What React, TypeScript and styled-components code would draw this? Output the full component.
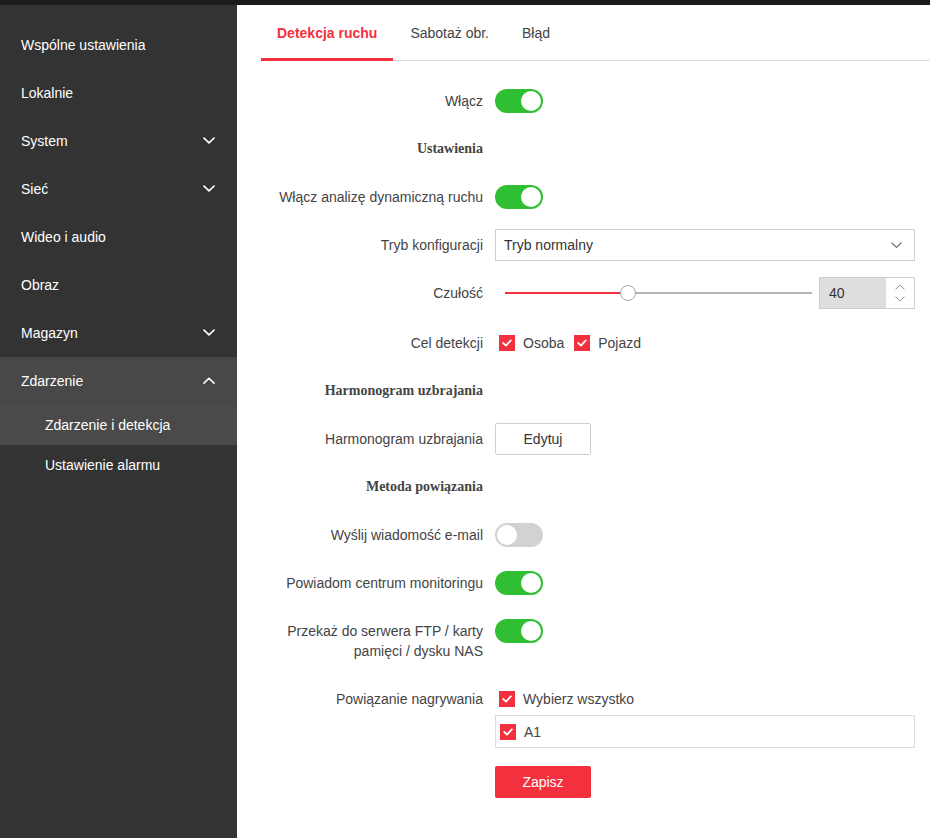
import React, { useState } from 'react'
import styled, { createGlobalStyle } from 'styled-components'

const RED = '#f3303e'
const GREEN = '#30bf32'

const GlobalStyle = createGlobalStyle`
  html, body {
    margin: 0;
    padding: 0;
    background: #ffffff;
  }
  body {
    font-family: 'Liberation Sans', Arial, sans-serif;
    font-size: 14px;
    color: #444;
  }
  * {
    box-sizing: border-box;
  }
`

const Page = styled.div`
  width: 930px;
  height: 838px;
  display: flex;
  flex-direction: column;
  overflow: hidden;
`

const TopBar = styled.div`
  height: 5px;
  background: #1b1b1b;
  flex-shrink: 0;
`

const Body = styled.div`
  flex: 1;
  display: flex;
  min-height: 0;
`

const Sidebar = styled.nav`
  width: 237px;
  flex-shrink: 0;
  background: #333333;
  padding-top: 16px;
`

const MenuGroup = styled.div<{ $open?: boolean }>`
  background: ${({ $open }) => ($open ? '#484848' : 'transparent')};
`

const MenuItem = styled.div`
  height: 48px;
  padding: 0 22px 0 21px;
  display: flex;
  align-items: center;
  justify-content: space-between;
  color: #ffffff;
  font-size: 14px;
`

const SubItem = styled.div<{ $active?: boolean }>`
  height: 40px;
  padding-left: 45px;
  display: flex;
  align-items: center;
  color: #ffffff;
  font-size: 14px;
  background: ${({ $active }) => ($active ? '#4a4a4a' : '#333333')};
`

const Main = styled.main`
  flex: 1;
  padding-left: 24px;
  min-width: 0;
`

const Tabs = styled.div`
  display: flex;
  height: 56px;
  border-bottom: 1px solid #dcdcdc;
`

const Tab = styled.div<{ $active?: boolean }>`
  padding: 3px 16px 0 ${({ $active }) => ($active ? 16 : 17)}px;
  display: flex;
  align-items: center;
  font-size: 14px;
  color: ${({ $active }) => ($active ? RED : '#444')};
  font-weight: ${({ $active }) => ($active ? 700 : 400)};
  border-bottom: 3px solid ${({ $active }) => ($active ? RED : 'transparent')};
  margin-bottom: -1px;
`

const Form = styled.div`
  padding-top: 16px;
  padding-right: 15px;
`

const Row = styled.div<{ $top?: number }>`
  display: grid;
  grid-template-columns: 222px 1fr;
  column-gap: 12px;
  padding-top: ${({ $top }) => $top ?? 0}px;
`

const Label = styled.div`
  padding: 14px 0;
  line-height: 20px;
  text-align: right;
  color: #444;
`

const Heading = styled(Label)`
  font-family: 'Liberation Serif', 'Times New Roman', serif;
  font-weight: 700;
  color: #444;
`

const Control = styled.div`
  height: 48px;
  display: flex;
  align-items: center;
  gap: 6px;
`

const Stack = styled.div`
  padding-top: 14px;
  display: flex;
  flex-direction: column;
`

const SwitchTrack = styled.button<{ $on: boolean }>`
  width: 48px;
  height: 24px;
  border-radius: 12px;
  border: none;
  padding: 2px;
  cursor: pointer;
  display: flex;
  justify-content: ${({ $on }) => ($on ? 'flex-end' : 'flex-start')};
  background: ${({ $on }) => ($on ? GREEN : '#d2d2d2')};
`

const SwitchKnob = styled.span`
  width: 20px;
  height: 20px;
  border-radius: 50%;
  background: #ffffff;
`

const Select = styled.div`
  width: 100%;
  height: 32px;
  border: 1px solid #cfcfcf;
  padding: 0 12px 0 8px;
  display: flex;
  align-items: center;
  justify-content: space-between;
  color: #333;
`

const SliderWrap = styled.div`
  flex: 1;
  display: flex;
  align-items: center;
  gap: 7px;
  padding-left: 10px;
`

const Track = styled.div`
  position: relative;
  flex: 1;
  height: 2px;
  background: #b4b4b4;
`

const TrackFill = styled.div`
  position: absolute;
  left: 0;
  top: 0;
  height: 2px;
  background: ${RED};
`

const Thumb = styled.div`
  position: absolute;
  top: -7px;
  width: 16px;
  height: 16px;
  margin-left: -8px;
  border-radius: 50%;
  background: #ffffff;
  border: 1px solid #a8a8a8;
`

const NumberBox = styled.div`
  width: 96px;
  height: 32px;
  border: 1px solid #cfcfcf;
  display: flex;
`

const NumberValue = styled.div`
  flex: 1;
  background: #dedede;
  padding-left: 9px;
  display: flex;
  align-items: center;
  color: #333;
`

const Spinner = styled.div`
  width: 28px;
  display: flex;
  flex-direction: column;
  align-items: center;
  justify-content: center;
  gap: 6px;
`

const CheckLabel = styled.label`
  display: flex;
  align-items: center;
  gap: 8px;
  color: #444;
  margin-left: 4px;
  line-height: 20px;
`

const CheckBox = styled.span`
  width: 16px;
  height: 16px;
  background: ${RED};
  display: flex;
  align-items: center;
  justify-content: center;
`

const Button = styled.button`
  width: 96px;
  height: 32px;
  border: 1px solid #cfcfcf;
  border-radius: 2px;
  background: #ffffff;
  font-family: inherit;
  font-size: 14px;
  color: #333;
`

const ChannelBox = styled.div`
  margin-top: 6px;
  height: 33px;
  border: 1px solid #dcdcdc;
  display: flex;
  align-items: center;
`

const SaveButton = styled.button`
  margin-top: 18px;
  width: 96px;
  height: 32px;
  border: none;
  border-radius: 2px;
  background: ${RED};
  color: #ffffff;
  font-family: inherit;
  font-size: 14px;
`

function Chevron({
  up,
  color = '#ffffff',
  size = 12,
  weight = 1.6,
}: {
  up?: boolean
  color?: string
  size?: number
  weight?: number
}) {
  return (
    <svg width={size} height={size * 0.6} viewBox="0 0 12 7" fill="none">
      <path
        d={up ? 'M1 6L6 1.2L11 6' : 'M1 1L6 5.8L11 1'}
        stroke={color}
        strokeWidth={weight}
        strokeLinecap="round"
        strokeLinejoin="round"
      />
    </svg>
  )
}

function Check() {
  return (
    <svg width="10" height="8" viewBox="0 0 10 8" fill="none">
      <path d="M1.2 4L4 6.6L8.8 1.4" stroke="#fff" strokeWidth="1.8" strokeLinecap="round" strokeLinejoin="round" />
    </svg>
  )
}

function Toggle({ initial }: { initial: boolean }) {
  const [on, setOn] = useState(initial)
  return (
    <SwitchTrack $on={on} onClick={() => setOn(!on)}>
      <SwitchKnob />
    </SwitchTrack>
  )
}

function Checked({ children }: { children: React.ReactNode }) {
  return (
    <CheckLabel>
      <CheckBox>
        <Check />
      </CheckBox>
      {children}
    </CheckLabel>
  )
}

const menu = [
  { name: 'Wspólne ustawienia' },
  { name: 'Lokalnie' },
  { name: 'System', sub: true },
  { name: 'Sieć', sub: true },
  { name: 'Wideo i audio' },
  { name: 'Obraz' },
  { name: 'Magazyn', sub: true },
]

export default function App() {
  const sensitivity = 40
  return (
    <Page>
      <GlobalStyle />
      <TopBar />
      <Body>
        <Sidebar>
          {menu.map((m) => (
            <MenuItem key={m.name}>
              {m.name}
              {m.sub && <Chevron />}
            </MenuItem>
          ))}
          <MenuGroup $open>
            <MenuItem>
              Zdarzenie
              <Chevron up />
            </MenuItem>
            <SubItem $active>Zdarzenie i detekcja</SubItem>
          </MenuGroup>
          <SubItem>Ustawienie alarmu</SubItem>
        </Sidebar>

        <Main>
          <Tabs>
            <Tab $active>Detekcja ruchu</Tab>
            <Tab>Sabotaż obr.</Tab>
            <Tab>Błąd</Tab>
          </Tabs>

          <Form>
            <Row>
              <Label>Włącz</Label>
              <Control>
                <Toggle initial />
              </Control>
            </Row>
            <Row>
              <Heading>Ustawienia</Heading>
            </Row>
            <Row>
              <Label>Włącz analizę dynamiczną ruchu</Label>
              <Control>
                <Toggle initial />
              </Control>
            </Row>
            <Row>
              <Label>Tryb konfiguracji</Label>
              <Control>
                <Select>
                  Tryb normalny
                  <Chevron color="#666" size={11} weight={1.2} />
                </Select>
              </Control>
            </Row>
            <Row>
              <Label>Czułość</Label>
              <Control>
                <SliderWrap>
                  <Track>
                    <TrackFill style={{ width: `${sensitivity}%` }} />
                    <Thumb style={{ left: `${sensitivity}%` }} />
                  </Track>
                  <NumberBox>
                    <NumberValue>{sensitivity}</NumberValue>
                    <Spinner>
                      <Chevron up color="#8a8a8a" size={10} weight={1.1} />
                      <Chevron color="#8a8a8a" size={10} weight={1.1} />
                    </Spinner>
                  </NumberBox>
                </SliderWrap>
              </Control>
            </Row>
            <Row $top={2}>
              <Label>Cel detekcji</Label>
              <Control>
                <Checked>Osoba</Checked>
                <Checked>Pojazd</Checked>
              </Control>
            </Row>
            <Row>
              <Heading>Harmonogram uzbrajania</Heading>
            </Row>
            <Row>
              <Label>Harmonogram uzbrajania</Label>
              <Control>
                <Button>Edytuj</Button>
              </Control>
            </Row>
            <Row>
              <Heading>Metoda powiązania</Heading>
            </Row>
            <Row>
              <Label>Wyślij wiadomość e-mail</Label>
              <Control>
                <Toggle initial={false} />
              </Control>
            </Row>
            <Row>
              <Label>Powiadom centrum monitoringu</Label>
              <Control>
                <Toggle initial />
              </Control>
            </Row>
            <Row>
              <Label>
                Przekaż do serwera FTP / karty
                <br />
                pamięci / dysku NAS
              </Label>
              <Control>
                <Toggle initial />
              </Control>
            </Row>
            <Row>
              <Label>Powiązanie nagrywania</Label>
              <Stack>
                <Checked>Wybierz wszystko</Checked>
                <ChannelBox>
                  <Checked>A1</Checked>
                </ChannelBox>
                <SaveButton>Zapisz</SaveButton>
              </Stack>
            </Row>
          </Form>
        </Main>
      </Body>
    </Page>
  )
}
